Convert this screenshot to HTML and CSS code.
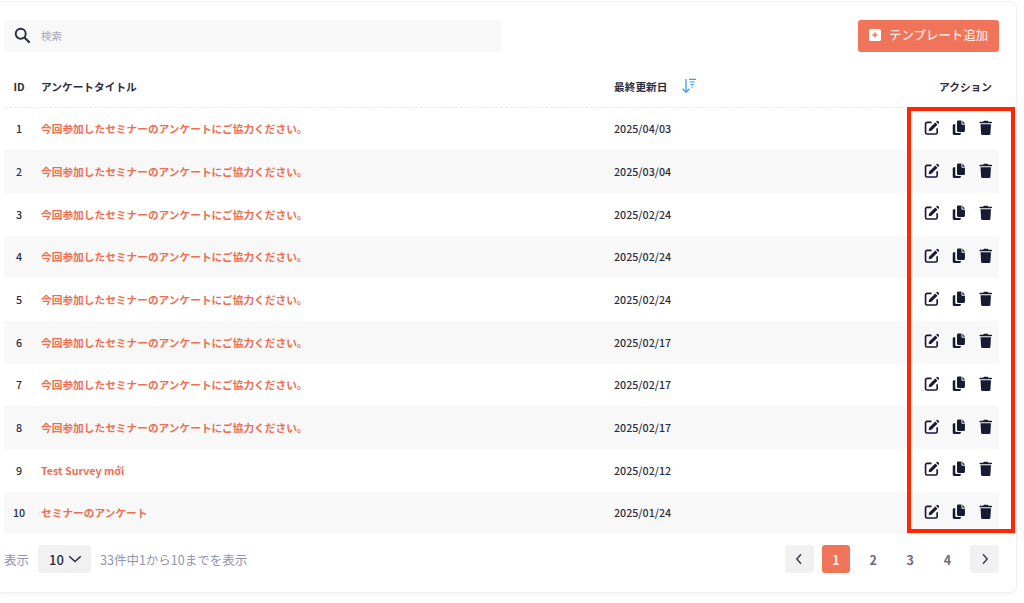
FILE: index.html
```html
<!DOCTYPE html>
<html lang="ja">
<head>
<meta charset="utf-8">
<title>テンプレート</title>
<link rel="stylesheet" href="styles.css">
</head>
<body>
<svg class="defs" width="0" height="0" aria-hidden="true">
  <symbol id="i-edit" viewBox="0 0 16 16">
    <path d="M13.6 8.6v4.2a1.6 1.6 0 0 1-1.6 1.6H3.2a1.6 1.6 0 0 1-1.6-1.6V4a1.6 1.6 0 0 1 1.6-1.6h4.6" fill="none" stroke="currentColor" stroke-width="1.7"/>
    <path d="M5.4 8.9 11.7 2.6l2.2 2.2-6.3 6.3-2.8.6z" fill="currentColor"/>
    <path d="M12.5 1.8l.7-.7a.9.9 0 0 1 1.3 0l.9.9a.9.9 0 0 1 0 1.3l-.7.7z" fill="currentColor"/>
  </symbol>
  <symbol id="i-copy" viewBox="0 0 16 16">
    <path d="M6.2 1.8A1.2 1.2 0 0 1 7.4.6h3.4v3.2a1 1 0 0 0 1 1h2.6v6.4a1.2 1.2 0 0 1-1.2 1.2H7.4a1.2 1.2 0 0 1-1.2-1.2z" fill="currentColor"/>
    <path d="M11.8.6l2.6 3.2h-2.6z" fill="currentColor"/>
    <path d="M4.4 4.4H3a1.2 1.2 0 0 0-1.2 1.2v8.6A1.2 1.2 0 0 0 3 15.4h6a1.2 1.2 0 0 0 1.2-1.2v-.8H5.8a1.4 1.4 0 0 1-1.4-1.4z" fill="currentColor"/>
  </symbol>
  <symbol id="i-trash" viewBox="0 0 16 16">
    <path d="M5.6 1.2A.8.8 0 0 1 6.3.7h3.4a.8.8 0 0 1 .7.5l.3.7h3.1a.7.7 0 0 1 0 1.5H2.2a.7.7 0 0 1 0-1.5h3.1z" fill="currentColor"/>
    <path d="M2.6 4.4h10.8l-.6 9.7a1.4 1.4 0 0 1-1.4 1.3H4.6a1.4 1.4 0 0 1-1.4-1.3z" fill="currentColor"/>
  </symbol>
</svg>
<main class="card">
  <div class="toolbar">
    <label class="search">
      <svg class="search-icon" viewBox="0 0 16 16"><circle cx="6.7" cy="6.7" r="5" fill="none" stroke="currentColor" stroke-width="1.9"/><path d="M10.4 10.4 15 15" stroke="currentColor" stroke-width="2.1" stroke-linecap="round"/></svg>
      <span class="placeholder">検索</span>
    </label>
    <button class="add-btn">
      <svg class="plus-icon" viewBox="0 0 12 12"><rect width="12" height="12" rx="1.5" fill="#fff"/><path d="M6 3.4v5.2M3.4 6h5.2" stroke="#ef7459" stroke-width="1.5"/></svg>
      テンプレート追加
    </button>
  </div>
  <div class="row head">
    <div class="c-id">ID</div>
    <div class="c-title">アンケートタイトル</div>
    <div class="c-date">最終更新日
      <svg class="sort-icon" viewBox="0 0 16 16"><path d="M5 1v13M1.6 10.8 5 14.4l3.4-3.6" fill="none" stroke="#3b9df0" stroke-width="1.3"/><path d="M8 1.4h7M8.8 4h5M9.6 6.6h3M10.4 9.2h1.4" stroke="#3b9df0" stroke-width="1.2"/></svg>
    </div>
    <div class="c-act head-act">アクション</div>
  </div>
  <div class="row"><div class="c-id">1</div><a class="c-title link">今回参加したセミナーのアンケートにご協力ください。</a><div class="c-date">2025/04/03</div><div class="c-act"><svg class="ic"><use href="#i-edit"/></svg><svg class="ic"><use href="#i-copy"/></svg><svg class="ic"><use href="#i-trash"/></svg></div></div>
  <div class="row"><div class="c-id">2</div><a class="c-title link">今回参加したセミナーのアンケートにご協力ください。</a><div class="c-date">2025/03/04</div><div class="c-act"><svg class="ic"><use href="#i-edit"/></svg><svg class="ic"><use href="#i-copy"/></svg><svg class="ic"><use href="#i-trash"/></svg></div></div>
  <div class="row"><div class="c-id">3</div><a class="c-title link">今回参加したセミナーのアンケートにご協力ください。</a><div class="c-date">2025/02/24</div><div class="c-act"><svg class="ic"><use href="#i-edit"/></svg><svg class="ic"><use href="#i-copy"/></svg><svg class="ic"><use href="#i-trash"/></svg></div></div>
  <div class="row"><div class="c-id">4</div><a class="c-title link">今回参加したセミナーのアンケートにご協力ください。</a><div class="c-date">2025/02/24</div><div class="c-act"><svg class="ic"><use href="#i-edit"/></svg><svg class="ic"><use href="#i-copy"/></svg><svg class="ic"><use href="#i-trash"/></svg></div></div>
  <div class="row"><div class="c-id">5</div><a class="c-title link">今回参加したセミナーのアンケートにご協力ください。</a><div class="c-date">2025/02/24</div><div class="c-act"><svg class="ic"><use href="#i-edit"/></svg><svg class="ic"><use href="#i-copy"/></svg><svg class="ic"><use href="#i-trash"/></svg></div></div>
  <div class="row"><div class="c-id">6</div><a class="c-title link">今回参加したセミナーのアンケートにご協力ください。</a><div class="c-date">2025/02/17</div><div class="c-act"><svg class="ic"><use href="#i-edit"/></svg><svg class="ic"><use href="#i-copy"/></svg><svg class="ic"><use href="#i-trash"/></svg></div></div>
  <div class="row"><div class="c-id">7</div><a class="c-title link">今回参加したセミナーのアンケートにご協力ください。</a><div class="c-date">2025/02/17</div><div class="c-act"><svg class="ic"><use href="#i-edit"/></svg><svg class="ic"><use href="#i-copy"/></svg><svg class="ic"><use href="#i-trash"/></svg></div></div>
  <div class="row"><div class="c-id">8</div><a class="c-title link">今回参加したセミナーのアンケートにご協力ください。</a><div class="c-date">2025/02/17</div><div class="c-act"><svg class="ic"><use href="#i-edit"/></svg><svg class="ic"><use href="#i-copy"/></svg><svg class="ic"><use href="#i-trash"/></svg></div></div>
  <div class="row"><div class="c-id">9</div><a class="c-title link">Test Survey mới</a><div class="c-date">2025/02/12</div><div class="c-act"><svg class="ic"><use href="#i-edit"/></svg><svg class="ic"><use href="#i-copy"/></svg><svg class="ic"><use href="#i-trash"/></svg></div></div>
  <div class="row"><div class="c-id">10</div><a class="c-title link">セミナーのアンケート</a><div class="c-date">2025/01/24</div><div class="c-act"><svg class="ic"><use href="#i-edit"/></svg><svg class="ic"><use href="#i-copy"/></svg><svg class="ic"><use href="#i-trash"/></svg></div></div>
  <div class="footer">
    <div class="info">
      <span>表示</span>
      <span class="size-select">10<svg class="chev" viewBox="0 0 14 8"><path d="M1.2 1.2 7 6.6l5.8-5.4" fill="none" stroke="currentColor" stroke-width="1.5"/></svg></span>
      <span>33件中1から10までを表示</span>
    </div>
    <nav class="pager">
      <span class="pg nav"><svg class="arrow" viewBox="0 0 8 12"><path d="M6 1.2 1.8 6 6 10.8" fill="none" stroke="currentColor" stroke-width="1.5"/></svg></span>
      <span class="pg active">1</span>
      <span class="pg">2</span>
      <span class="pg">3</span>
      <span class="pg">4</span>
      <span class="pg nav"><svg class="arrow" viewBox="0 0 8 12"><path d="M2 1.2 6.2 6 2 10.8" fill="none" stroke="currentColor" stroke-width="1.5"/></svg></span>
    </nav>
  </div>
  <div class="highlight"></div>
</main>
</body>
</html>
```
FILE: styles.css
```css
* { box-sizing: border-box; }
html, body { margin: 0; padding: 0; background: #fff; height: 603px; overflow: hidden; }
body {
  font-family: "Noto Sans CJK JP", "Noto Sans", sans-serif;
  font-size: 10.7px;
  color: #2b2c3f;
  padding-top: 1px;
}
.defs { position: absolute; }
.card {
  position: relative;
  width: 1018px;
  height: 592px;
  margin-left: -1px;
  padding: 0 17px 0 5px;
  background: #fff;
  border: 1px solid #f1f1f3;
  border-left: 0;
  border-radius: 0 7px 7px 0;
  box-shadow: 0 2px 4px rgba(0, 0, 0, .04);
}
.toolbar { display: flex; justify-content: space-between; height: 64px; padding-top: 18px; }
.search {
  display: flex;
  align-items: center;
  width: 498px;
  height: 32px;
  padding: 0 0 2px 10px;
  background: #f8f8f8;
  border-radius: 2px;
}
.search-icon { width: 16px; height: 16px; color: #2b2c3f; margin-right: 11px; }
.placeholder { color: #a4a6b8; font-size: 10.4px; }
.add-btn {
  display: flex;
  align-items: center;
  gap: 8px;
  width: 141px;
  height: 32px;
  padding: 0 0 2px 11px;
  border: 0;
  border-radius: 3px;
  background: #ef7459;
  color: #fde9e3;
  font: 500 12.45px "Noto Sans CJK JP", sans-serif;
}
.plus-icon { width: 12px; height: 12px; flex: none; }
.row {
  display: flex;
  align-items: center;
  height: 42.68px;
  font-weight: 500;
}
.row:nth-of-type(even) { background: #f8f8f8; }
.row.head { height: 41.5px; background: none; border-bottom: 1px dashed #e9e9ee; font-weight: 700; }
.c-id { width: 37px; text-align: center; flex: none; padding-right: 7px; }
.c-title { width: 573px; flex: none; }
.link { color: #ef6e50; font-weight: 700; }
.c-date { flex: 1; display: flex; align-items: center; }
.c-act { display: flex; gap: 11.5px; padding: 0 6px 2px 0; align-items: center; justify-content: flex-end; }
.head-act { padding: 0 7px 0 0; }
.sort-icon { width: 16px; height: 16px; margin-left: 14px; }
.ic { width: 15.5px; height: 15.5px; color: #171a33; }
.footer {
  display: flex;
  justify-content: space-between;
  align-items: center;
  height: 50px;
  color: #9294ab;
  font-size: 12.5px;
}
.info { display: flex; align-items: center; gap: 9px; }
.size-select {
  display: flex;
  align-items: center;
  gap: 4px;
  width: 53px;
  height: 28px;
  padding-left: 11px;
  border-radius: 3px;
  background: #f1f1f2;
  color: #2b2c3f;
  font-size: 13px;
  font-weight: 500;
}
.chev { width: 14px; height: 8px; }
.pager { display: flex; gap: 8.5px; }
.pg {
  display: flex;
  align-items: center;
  justify-content: center;
  width: 28.7px;
  height: 28px;
  border-radius: 3px;
  color: #6b6d82;
  font-weight: 700;
}
.pg.nav { background: #f1f1f2; color: #3c3e52; }
.pg.active { background: #ef7459; color: #fde9e3; margin-left: -0.5px; }
.arrow { width: 8px; height: 12px; }
.highlight {
  position: absolute;
  left: 908px;
  top: 105px;
  width: 108px;
  height: 426px;
  border: 4px solid #ff2600;
  pointer-events: none;
}
```
